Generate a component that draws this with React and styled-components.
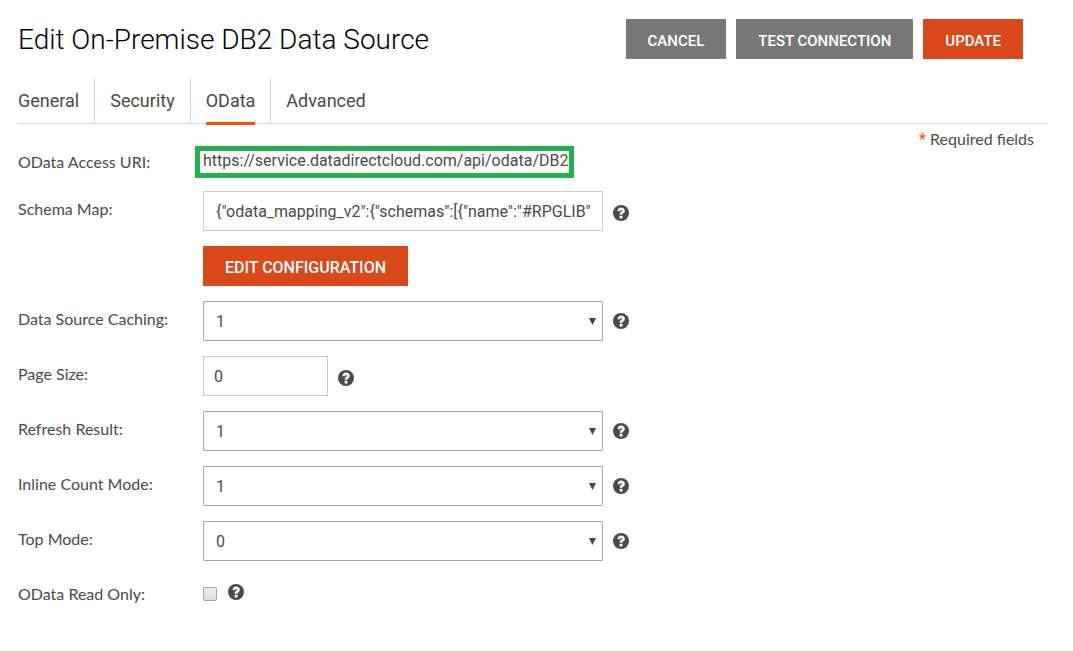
import { useState } from 'react';
import styled, { createGlobalStyle } from 'styled-components';

const tabs = ['General', 'Security', 'OData', 'Advanced'];

const HelpButton = ({ topic }) => (
    <Help type="button" aria-label={`Help: ${topic}`}>
        <svg width="16" height="16" viewBox="0 0 16 16" aria-hidden="true">
            <circle cx="8" cy="8" r="8" fill="#4a4a4a" />
            <path
                d="M4.6 6.2C4.6 4 6 2.6 8.1 2.6s3.7 1.3 3.7 3.1c0 1.5-.8 2.2-1.6 2.8-.6.4-.7.7-.7 1.300H6.700c0-1.600.4-2.200 1.300-2.800.6-.4.8-.7.8-1.200 0-.5-.3-.8-.8-.8s-.9.4-.9 1.200z"
                fill="#fff"
            />
            <path d="M6.700 10.800h2.800v2.700H6.700z" fill="#fff" />
        </svg>
    </Help>
);

const SelectRow = ({ id, label, initial }) => {
    const [value, setValue] = useState(initial);

    return (
        <Row>
            <Label htmlFor={id}>{label}:</Label>
            <SelectBox>
                <Select id={id} value={value} onChange={(e) => setValue(e.target.value)}>
                    <option value="0">0</option>
                    <option value="1">1</option>
                    <option value="2">2</option>
                </Select>
                <Caret viewBox="0 0 7 7" aria-hidden="true">
                    <path d="M0 0h7L3.500 7z" fill="#444" />
                </Caret>
            </SelectBox>
            <HelpButton topic={label} />
        </Row>
    );
}

const App = () => {

    const [activeTab, setActiveTab] = useState('OData');
    const [schemaMap, setSchemaMap] = useState('{"odata_mapping_v2":{"schemas":[{"name":"#RPGLIB"');
    const [pageSize, setPageSize] = useState('0');
    const [readOnly, setReadOnly] = useState(false);

    return (
        <Page>
            <GlobalStyle />
            <Header>
                <Title>Edit On-Premise DB2 Data Source</Title>
                <Actions>
                    <Button type="button">CANCEL</Button>
                    <Button type="button">TEST CONNECTION</Button>
                    <Button type="submit" form="odata-form" $primary>UPDATE</Button>
                </Actions>
            </Header>
            <Tabs role="tablist">
                {tabs.map(tab =>
                    <TabItem key={tab} role="presentation">
                        <Tab
                            type="button"
                            role="tab"
                            aria-selected={tab === activeTab}
                            $active={tab === activeTab}
                            onClick={() => setActiveTab(tab)}
                        >
                            {tab}
                        </Tab>
                    </TabItem>
                )}
            </Tabs>
            <Body>
                <Form id="odata-form" onSubmit={(e) => e.preventDefault()}>
                    <UriRow>
                        <UriLabel>OData Access URI:</UriLabel>
                        <Uri>https://service.datadirectcloud.com/api/odata/DB2</Uri>
                    </UriRow>
                    <InputRow>
                        <Label htmlFor="schema-map">Schema Map:</Label>
                        <Input
                            id="schema-map"
                            value={schemaMap}
                            onChange={(e) => setSchemaMap(e.target.value)}
                        />
                        <HelpButton topic="Schema Map" />
                    </InputRow>
                    <ButtonRow>
                        <Button type="button" $primary $large>EDIT CONFIGURATION</Button>
                    </ButtonRow>
                    <SelectRow id="caching" label="Data Source Caching" initial="1" />
                    <InputRow>
                        <Label htmlFor="page-size">Page Size:</Label>
                        <Input
                            id="page-size"
                            $small
                            value={pageSize}
                            onChange={(e) => setPageSize(e.target.value)}
                        />
                        <HelpButton topic="Page Size" />
                    </InputRow>
                    <SelectRow id="refresh" label="Refresh Result" initial="1" />
                    <SelectRow id="inline-count" label="Inline Count Mode" initial="1" />
                    <SelectRow id="top-mode" label="Top Mode" initial="0" />
                    <CheckRow>
                        <Label htmlFor="read-only">OData Read Only:</Label>
                        <Checkbox
                            id="read-only"
                            type="checkbox"
                            checked={readOnly}
                            onChange={(e) => setReadOnly(e.target.checked)}
                        />
                        <HelpButton topic="OData Read Only" />
                    </CheckRow>
                </Form>
                <Required><Star>*</Star> Required fields</Required>
            </Body>
        </Page>
    );
}

export default App;

const GlobalStyle = createGlobalStyle`
    *, *::before, *::after {
        box-sizing: border-box;
    }
    body {
        margin: 0;
        background-color: #fff;
        color: #4a4a4a;
        font-family: Lato, sans-serif;
        font-size: 16px;
        line-height: 20px;
    }
`

const Page = styled.div`
    padding: 19px 25px 19px 18px;
`

const Header = styled.header`
    display: flex;
    justify-content: space-between;
    padding-right: 25px;
`

const Title = styled.h1`
    margin: 0;
    color: #000;
    font-family: Roboto, sans-serif;
    font-size: 28px;
    font-weight: 300;
    line-height: 42px;
`

const Actions = styled.div`
    display: flex;
    gap: 10px;
`

const Button = styled.button`
    height: 40px;
    padding: 3px 22px 0;
    border: none;
    background-color: ${({ $primary }) => $primary ? '#d9481a' : '#777'};
    color: #fff;
    font-family: Roboto, sans-serif;
    font-size: ${({ $large }) => $large ? '16px' : '15px'};
    font-weight: 500;
    white-space: nowrap;
    cursor: pointer;
`

const Tabs = styled.div`
    display: flex;
    margin-top: 18px;
    border-bottom: 1px solid #d9d9d9;
`

const TabItem = styled.div`
    height: 44px;
    padding: 0 15px;
    &:first-child {
        padding-left: 0;
    }
    & + & {
        border-left: 1px solid #d9d9d9;
    }
`

const Tab = styled.button`
    height: 46px;
    padding: 0;
    border: none;
    border-bottom: 3px solid ${({ $active }) => $active ? '#ff4d00' : 'transparent'};
    background: none;
    color: #4a4a4a;
    font-family: Roboto, sans-serif;
    font-size: 18px;
    cursor: pointer;
`

const Body = styled.div`
    display: flex;
    justify-content: space-between;
    align-items: flex-start;
    padding-right: 14px;
`

const Form = styled.form`
    display: flex;
    flex-direction: column;
    flex: 1;
    gap: 15px;
    padding-top: 22px;
`

const Row = styled.div`
    display: flex;
    align-items: center;
    min-height: 40px;
`

const Label = styled.label`
    flex: none;
    align-self: flex-start;
    width: 185px;
    padding-top: 8px;
`

const UriRow = styled.div`
    display: flex;
    align-items: center;
    margin-bottom: -2px;
`

const UriLabel = styled.span`
    flex: none;
    width: 177px;
`

const Uri = styled.output`
    height: 32px;
    padding: 0 1px 0 3px;
    border: 5px solid #22b14c;
    font-family: Roboto, sans-serif;
    line-height: 20px;
    white-space: nowrap;
`

const ButtonRow = styled(Row)`
    padding-left: 185px;
`

const Input = styled.input`
    width: ${({ $small }) => $small ? '125px' : '400px'};
    height: 40px;
    padding: 0 10px 0 ${({ $small }) => $small ? '10px' : '12px'};
    border: 1px solid #ccc;
    background-color: #fff;
    color: #4a4a4a;
    font-family: Roboto, sans-serif;
    font-size: 16px;
`

const SelectBox = styled.div`
    position: relative;
    width: 400px;
`

const Select = styled.select`
    display: block;
    width: 100%;
    height: 40px;
    padding: 0 24px 0 12px;
    appearance: none;
    border: 1px solid #a6a6a6;
    border-radius: 1px;
    background-color: #fff;
    color: #4a4a4a;
    font-family: Roboto, sans-serif;
    font-size: 16px;
`

const Caret = styled.svg`
    position: absolute;
    top: 17px;
    right: 7px;
    width: 7px;
    height: 7px;
    pointer-events: none;
`

const Help = styled.button`
    display: flex;
    margin-left: 10px;
    padding: 0;
    border: none;
    background: none;
    cursor: help;
`

const InputRow = styled(Row)`
    ${Help} {
        margin-top: 4px;
    }
`

const CheckRow = styled(Row)`
    align-items: flex-start;
    ${Help} {
        margin-top: 8px;
    }
`

const Checkbox = styled.input`
    appearance: none;
    width: 14px;
    height: 14px;
    margin: 11px 1px 0 0;
    border: 1px solid #a3a3a3;
    border-radius: 2px;
    background: linear-gradient(#eee, #dcdcdc);
    &:checked {
        background: #777;
    }
`

const Required = styled.p`
    margin: 0;
    padding-top: 5px;
`

const Star = styled.span`
    color: #ff4d00;
    font-family: Roboto, sans-serif;
`
